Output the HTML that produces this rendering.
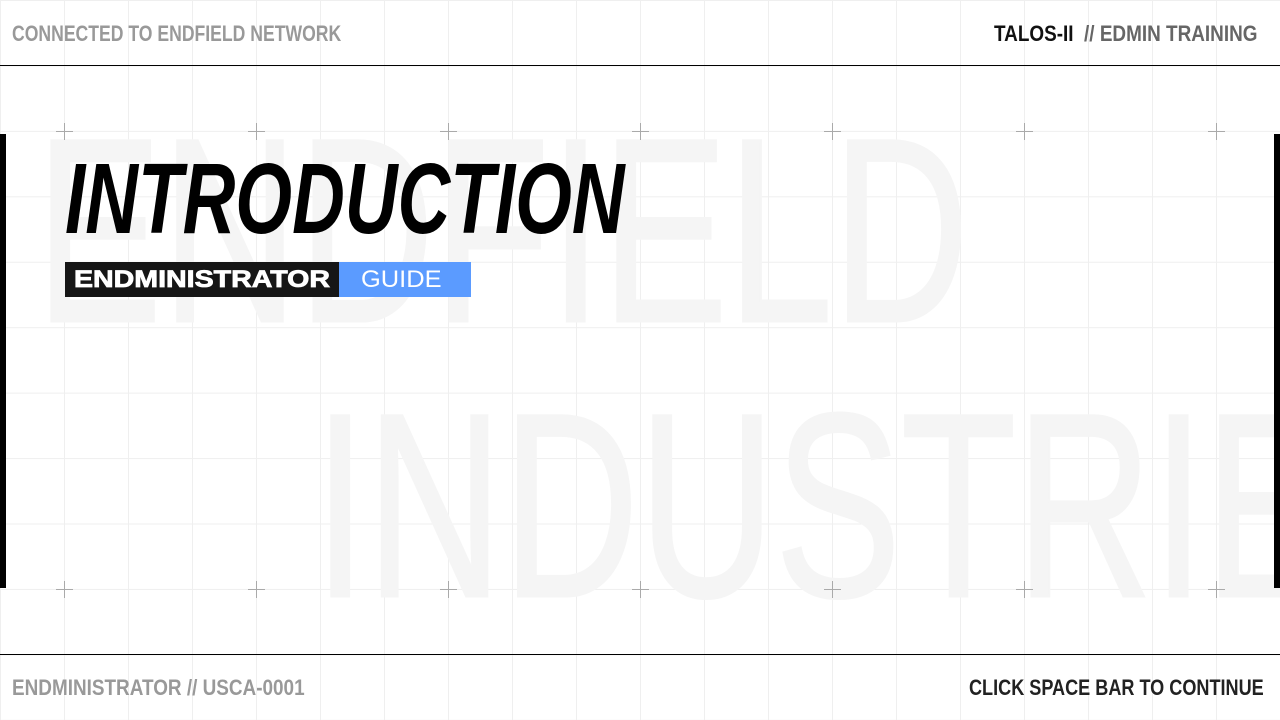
<!DOCTYPE html>
<html><head><meta charset="utf-8"><style>
html,body{margin:0;padding:0}
body{width:1280px;height:720px;position:relative;overflow:hidden;background:#fff;font-family:"Liberation Sans",sans-serif}
.grid{position:absolute;inset:0;background-image:linear-gradient(to right,#efefef 1px,transparent 1px),linear-gradient(to bottom,#efefef 1px,transparent 1px);background-size:64px 65.45px;background-position:0 0}
.clip{position:absolute;left:0;top:0;width:1280px;height:720px;overflow:hidden}
.bg{position:absolute;color:#f5f5f5;font-weight:400;white-space:nowrap;transform-origin:left top;line-height:1;-webkit-text-stroke:3px #f5f5f5}
.t{position:absolute;white-space:nowrap;transform-origin:left top;line-height:1}
.hl{position:absolute;left:0;width:1280px;height:1px;background:#000}
.bar{position:absolute;top:134px;height:454px;width:6px;background:#000}
.cr{position:absolute;width:17px;height:17px}
.cr:before{content:"";position:absolute;left:8px;top:0;width:1px;height:17px;background:#aaa}
.cr:after{content:"";position:absolute;top:8px;left:0;height:1px;width:17px;background:#aaa}
</style></head><body>
<div class="grid"></div>
<div class="clip">
<div class="bg" style="left:36px;top:100px;font-size:262px;transform:scaleX(0.72)">ENDFIELD</div>
<div class="bg" style="left:314px;top:375px;font-size:262px;transform:scaleX(0.72)">INDUSTRIES</div>
</div>
<div class="hl" style="top:65px"></div>
<div class="hl" style="top:654px"></div>
<div class="bar" style="left:0"></div>
<div class="bar" style="left:1274px"></div>

<div class="cr" style="left:56px;top:123px"></div>
<div class="cr" style="left:248px;top:123px"></div>
<div class="cr" style="left:440px;top:123px"></div>
<div class="cr" style="left:632px;top:123px"></div>
<div class="cr" style="left:824px;top:123px"></div>
<div class="cr" style="left:1016px;top:123px"></div>
<div class="cr" style="left:1208px;top:123px"></div>
<div class="cr" style="left:56px;top:581px"></div>
<div class="cr" style="left:248px;top:581px"></div>
<div class="cr" style="left:440px;top:581px"></div>
<div class="cr" style="left:632px;top:581px"></div>
<div class="cr" style="left:824px;top:581px"></div>
<div class="cr" style="left:1016px;top:581px"></div>
<div class="cr" style="left:1208px;top:581px"></div>

<div class="t" style="left:12px;top:23px;font-size:22px;color:#999;font-weight:700;transform:scaleX(0.8)">CONNECTED TO ENDFIELD NETWORK</div>
<div class="t" style="left:994px;top:23px;font-size:22px;font-weight:700;transform:scaleX(0.86)"><span style="color:#111">TALOS-II</span> <span style="color:#666">&nbsp;// EDMIN TRAINING</span></div>

<div class="t" style="left:65px;top:149px;font-size:100px;font-weight:700;font-style:italic;color:#000;transform:scaleX(0.73)">INTRODUCTION</div>
<div style="position:absolute;left:65px;top:262px;width:274px;height:35px;background:#161616"></div>
<div style="position:absolute;left:339px;top:262px;width:132px;height:35px;background:#5b9bff"></div>
<div class="t" style="left:74px;top:268px;font-size:24px;font-weight:900;color:#fff;-webkit-text-stroke:0.8px #fff;transform:scaleX(1.19)">ENDMINISTRATOR</div>
<div class="t" style="left:361px;top:268px;font-size:24px;color:#fff;transform:scaleX(1.06)">GUIDE</div>

<div class="t" style="left:12px;top:677px;font-size:22px;color:#999;font-weight:700;transform:scaleX(0.86)">ENDMINISTRATOR // USCA-0001</div>
<div class="t" style="left:969px;top:677px;font-size:22px;color:#222;font-weight:700;transform:scaleX(0.822)">CLICK SPACE BAR TO CONTINUE</div>
</body></html>
